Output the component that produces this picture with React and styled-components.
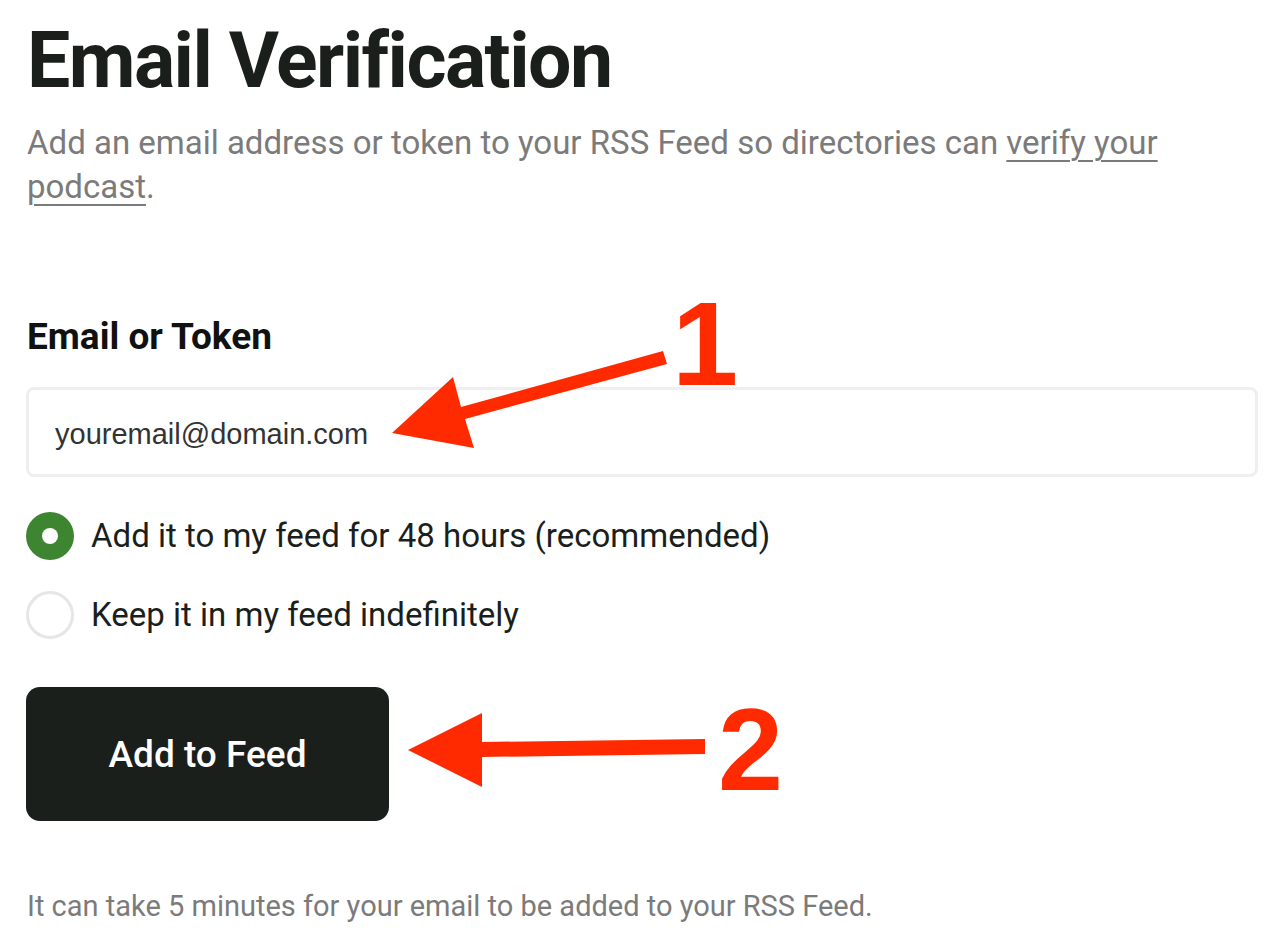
import React, { useState } from "react";
import styled, { createGlobalStyle } from "styled-components";

const GlobalStyle = createGlobalStyle`
	html, body {
		margin: 0;
		padding: 0;
		background: #ffffff;
	}

	body {
		font-family: Roboto, "Noto Sans", sans-serif;
		color: #1b1f1c;
	}
`;

const Page = styled.main`
	position: relative;
	width: 1286px;
	height: 948px;
	overflow: hidden;
	box-sizing: border-box;
	padding: 17px 28px 0 26px;
`;

const Title = styled.h1`
	margin: 0 0 0 1px;

	color: #1b1f1c;
	font-size: 77px;
	font-weight: 700;
	letter-spacing: -0.02em;
	line-height: 88px;
`;

const Lead = styled.p`
	margin: 16px 0 0 1px;
	max-width: 1170px;

	color: #7b7b7b;
	font-size: 33px;
	font-weight: 400;
	line-height: 44px;

	a {
		color: inherit;
		text-decoration: underline;
		text-decoration-thickness: 2px;
		text-underline-offset: 6px;
	}
`;

const Label = styled.label`
	display: block;
	margin: 108px 0 0 1px;

	color: #111111;
	font-size: 37px;
	font-weight: 700;
	line-height: 40px;
`;

const Input = styled.input`
	display: block;
	box-sizing: border-box;
	margin: 30px 0 0;
	padding: 5px 26px 0;
	width: 1232px;
	height: 90px;

	border: 3px solid #efefef;
	border-radius: 8px;
	background: #ffffff;
	color: #333333;
	font-family: "Liberation Sans", Arial, sans-serif;
	font-size: 29px;
	outline: none;
`;

const Options = styled.div`
	display: flex;
	flex-direction: column;
	gap: 31px;
	margin: 35px 0 0;
`;

const Option = styled.label`
	display: flex;
	align-items: center;
	gap: 17px;

	color: #1b1f1c;
	font-size: 33px;
	line-height: 48px;
	cursor: pointer;
`;

const Dot = styled.span`
	display: flex;
	align-items: center;
	justify-content: center;
	box-sizing: border-box;
	width: 48px;
	height: 48px;
	flex: none;

	border-radius: 50%;
	border: ${props => (props.checked ? "none" : "3px solid #e6e6e6")};
	background: ${props => (props.checked ? "#3e8531" : "#ffffff")};

	&:after {
		content: "";
		display: ${props => (props.checked ? "block" : "none")};
		width: 16px;
		height: 16px;
		border-radius: 50%;
		background: #ffffff;
	}
`;

const Button = styled.button`
	display: flex;
	align-items: center;
	justify-content: center;
	margin: 48px 0 0;
	width: 363px;
	height: 134px;

	border: none;
	border-radius: 14px;
	background: #1b1f1c;
	color: #ffffff;
	font-family: Roboto, "Noto Sans", sans-serif;
	font-size: 37px;
	font-weight: 500;
	cursor: pointer;
`;

const Note = styled.p`
	margin: 67px 0 0 1px;

	color: #7b7b7b;
	font-size: 29px;
	line-height: 36px;
`;

const Annotations = styled.svg`
	position: absolute;
	top: 0;
	left: 0;
	pointer-events: none;
`;

const Num = styled.text`
	fill: #ff2a00;
	font-family: "Liberation Sans", Arial, sans-serif;
	font-weight: 700;
`;

const options = [
	{ id: "48h", label: "Add it to my feed for 48 hours (recommended)" },
	{ id: "forever", label: "Keep it in my feed indefinitely" }
];

export default function App() {
	const [choice, setChoice] = useState("48h");

	return (
		<Page>
			<GlobalStyle />
			<Title>Email Verification</Title>
			<Lead>
				Add an email address or token to your RSS Feed so directories can{" "}
				<a href="#verify">verify your podcast</a>.
			</Lead>

			<Label htmlFor="token">Email or Token</Label>
			<Input id="token" defaultValue="youremail@domain.com" />

			<Options>
				{options.map(opt => (
					<Option key={opt.id} onClick={() => setChoice(opt.id)}>
						<Dot checked={choice === opt.id} />
						{opt.label}
					</Option>
				))}
			</Options>

			<Button>Add to Feed</Button>

			<Note>It can take 5 minutes for your email to be added to your RSS Feed.</Note>

			<Annotations width="1286" height="948" viewBox="0 0 1286 948">
				<polygon
					fill="#ff2a00"
					points="663,351 667,364 465,419 474,448 392,433 453,377 461,407"
				/>
				<Num x="672" y="385" fontSize="119" textLength="58">1</Num>
				<polygon
					fill="#ff2a00"
					points="705,739 705,754 482,757 482,787 408,750 482,713 482,742"
				/>
				<Num x="718" y="790" fontSize="117">2</Num>
			</Annotations>
		</Page>
	);
}
